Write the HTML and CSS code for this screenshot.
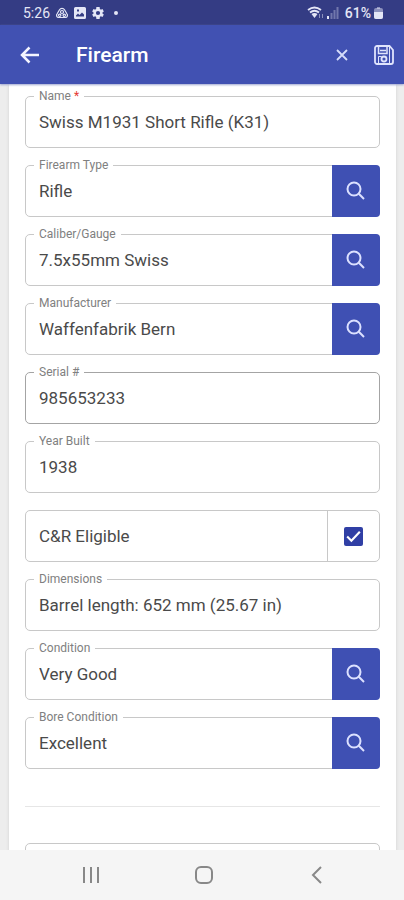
FILE: index.html
```
<!DOCTYPE html>
<html lang="en">
<head>
<meta charset="utf-8">
<meta name="viewport" content="width=device-width, initial-scale=1">
<title>Firearm</title>
<link rel="stylesheet" href="styles.css">
</head>
<body>
<svg class="sprite" aria-hidden="true">
  <symbol id="search" viewBox="0 0 20 20"><circle cx="8" cy="8" r="6.5"/><path d="M12.8 12.8L18 18"/></symbol>
</svg>
<div class="status">
  <span class="time">5:26</span>
  <svg class="status-icon" viewBox="0 0 12 12"><g fill="none" stroke="currentColor" stroke-width="1.2"><path d="M2.500 10.500A2.200 2.200 0 0 1 1 7L3.500 2.800A2.900 2.900 0 0 1 8.500 2.800L11 7A2.200 2.200 0 0 1 9.500 10.500Z"/><circle cx="6" cy="5" r="1.500"/><circle cx="3.700" cy="8.300" r="1.200"/><circle cx="8.300" cy="8.300" r="1.200"/></g></svg>
  <svg class="status-icon" viewBox="0 0 12 12"><path fill-rule="evenodd" d="M1.500 0h9A1.500 1.500 0 0 1 12 1.500v9A1.500 1.500 0 0 1 10.500 12h-9A1.500 1.500 0 0 1 0 10.500v-9A1.500 1.500 0 0 1 1.500 0zM2 9.500h8V7.500L8 5.500 5.500 8 4 6.500 2 8.500zM3 2.500v2h2v-2z"/></svg>
  <svg class="status-icon" viewBox="2 2 20 20"><path d="M19.400 13a7.500 7.500 0 0 0 0-2l2.300-1.700-2.200-3.900-2.700 1.100a7.500 7.500 0 0 0-1.700-1L14.700 2H9.300l-.4 3.500a7.500 7.500 0 0 0-1.700 1L4.500 5.400 2.300 9.300 4.600 11a7.500 7.500 0 0 0 0 2l-2.300 1.700 2.200 3.900 2.700-1.100a7.500 7.500 0 0 0 1.700 1l.4 3.500h5.400l.4-3.500a7.500 7.500 0 0 0 1.700-1l2.700 1.100 2.200-3.900zM12 15.500a3.500 3.500 0 1 1 0-7 3.500 3.500 0 0 1 0 7z"/></svg>
  <span class="dot"></span>
  <span class="signals">
    <svg width="17" height="13" viewBox="0 0 17 13"><g fill="none" stroke="currentColor" stroke-width="1.800"><path d="M1 4Q7.500-1 14 4"/><path d="M3 6.500Q7.500 3 12 6.500"/></g><path d="M4.500 8Q7.500 6 10.500 8L7.500 12z"/><path d="M12.500 8v4M15.500 8v4" stroke="currentColor" opacity=".5"/></svg>
    <svg width="12" height="12" viewBox="0 0 12 12"><path d="M0 9h2v3H0z"/><path d="M3.500 6h2v6h-2zM6.500 3h2v9h-2zM9.500 0h2v12h-2z" opacity=".35"/></svg>
    <span class="percent">61%</span>
    <svg width="9" height="12" viewBox="0 0 9 12"><path d="M3 0h3v2H3z" opacity=".5"/><rect y="1" width="9" height="11" rx="2" opacity=".5"/><path d="M0 5h9v5a2 2 0 0 1-2 2H2a2 2 0 0 1-2-2z"/></svg>
  </span>
</div>
<header class="bar">
  <button class="bar-button" aria-label="Back"><svg width="20" height="18" viewBox="0 0 20 18"><path d="M19 9H2M9.500 1.500L2 9l7.500 7.500" stroke-width="2.500"/></svg></button>
  <h1>Firearm</h1>
  <button class="bar-button close" aria-label="Cancel"><svg width="12" height="12" viewBox="0 0 12 12"><path d="M1 1l10 10M11 1L1 11" stroke-width="1.800"/></svg></button>
  <button class="bar-button save" aria-label="Save"><svg width="20" height="20" viewBox="0 0 20 20"><path d="M3 1h12.500L19 5v12a2 2 0 0 1-2 2H3a2 2 0 0 1-2-2V3a2 2 0 0 1 2-2z" stroke-width="1.800"/><path d="M4.500 2v6.500H13V2M6 5.500h6" stroke-width="1.500"/><path d="M15.500 2v17M4.500 18v-6.500h3" stroke-width="1"/><circle cx="10" cy="14" r="2.500" stroke-width="1.800"/></svg></button>
</header>
<main>
  <form class="card">
    <div class="field"><label for="name">Name <span class="required">*</span></label><input id="name" type="text" value="Swiss M1931 Short Rifle (K31)"></div>
    <div class="field"><label for="type">Firearm Type</label><input id="type" type="text" value="Rifle"><button type="button" class="lookup" aria-label="Search firearm type"><svg><use href="#search"/></svg></button></div>
    <div class="field"><label for="caliber">Caliber/Gauge</label><input id="caliber" type="text" value="7.5x55mm Swiss"><button type="button" class="lookup" aria-label="Search caliber"><svg><use href="#search"/></svg></button></div>
    <div class="field"><label for="maker">Manufacturer</label><input id="maker" type="text" value="Waffenfabrik Bern"><button type="button" class="lookup" aria-label="Search manufacturer"><svg><use href="#search"/></svg></button></div>
    <div class="field active"><label for="serial">Serial #</label><input id="serial" type="text" value="985653233"></div>
    <div class="field"><label for="year">Year Built</label><input id="year" type="text" value="1938"></div>
    <div class="field check"><label class="check-text" for="eligible">C&amp;R Eligible</label><span class="check-cell"><input id="eligible" type="checkbox" checked><svg viewBox="0 0 18 18"><path d="M3 9l4 4 8-8.500"/></svg></span></div>
    <div class="field"><label for="dimensions">Dimensions</label><input id="dimensions" type="text" value="Barrel length: 652 mm (25.67 in)"></div>
    <div class="field"><label for="condition">Condition</label><input id="condition" type="text" value="Very Good"><button type="button" class="lookup" aria-label="Search condition"><svg><use href="#search"/></svg></button></div>
    <div class="field"><label for="bore">Bore Condition</label><input id="bore" type="text" value="Excellent"><button type="button" class="lookup" aria-label="Search bore condition"><svg><use href="#search"/></svg></button></div>
    <hr>
    <div class="field"></div>
  </form>
</main>
<nav>
  <button aria-label="Recent apps"><svg width="18" height="18" viewBox="0 0 18 18"><path d="M2 1v16M9 1v16M16 1v16"/></svg></button>
  <button aria-label="Home"><svg width="18" height="18" viewBox="0 0 18 18"><rect x="1" y="1" width="16" height="16" rx="5"/></svg></button>
  <button aria-label="Back"><svg width="18" height="18" viewBox="0 0 18 18"><path d="M13 1L5 9l8 8"/></svg></button>
</nav>
</body>
</html>
```
FILE: styles.css
```
* { box-sizing: border-box; }
body {
  margin: 0;
  height: 100vh;
  display: flex;
  flex-direction: column;
  overflow: hidden;
  background: #ededed;
  color: #4a4a4a;
  font-family: Roboto, "Liberation Sans", sans-serif;
  font-size: 17px;
}
button { border: 0; padding: 0; background: none; color: inherit; display: grid; place-items: center; }
button svg { fill: none; stroke: currentColor; }
.sprite { display: none; }
.status {
  flex: none;
  height: 25px;
  padding: 0 21px 0 23px;
  display: flex;
  align-items: center;
  gap: 6px;
  background: #343c84;
  color: #e4e6f6;
  font-size: 14px;
}
.status svg { fill: currentColor; }
.status-icon { width: 12px; height: 12px; }
.dot { width: 4px; height: 4px; margin-left: 4px; border-radius: 50%; background: currentColor; }
.signals { margin-left: auto; display: flex; align-items: center; gap: 3px; }
.percent { margin-left: 3px; font-weight: 500; }
.bar {
  flex: none;
  height: 59px;
  padding: 0 10px;
  display: flex;
  align-items: center;
  background: #4151b2;
  color: #fff;
  box-shadow: 0 1px 2px #9da4cf;
  z-index: 1;
}
.bar h1 { flex: 1; margin: 0 0 0 26px; font-size: 21px; font-weight: 500; }
.bar-button { width: 40px; height: 40px; color: #f4f5ff; }
.save { width: 20px; color: #dfe4fc; }
.close { margin-right: 12px; color: #d5dcfa; }
main { flex: 1; min-height: 0; overflow: hidden; padding: 0 8px 0 9px; }
.card {
  min-height: 100%;
  padding: 12px 16px;
  display: flex;
  flex-direction: column;
  gap: 17px;
  background: #fff;
  box-shadow: 0 0 3px #d0d0d0;
}
.field {
  position: relative;
  flex: none;
  height: 52px;
  display: flex;
  border: 1px solid #c8c8c8;
  border-radius: 5px;
}
.active { border-color: #a4a4a4; }
.field > label:not(.check-text) {
  position: absolute;
  top: -9px;
  left: 8px;
  padding: 0 5px;
  background: #fff;
  color: #808080;
  font-size: 12px;
  line-height: 16px;
}
.field > label .required { color: #e53935; }
.field input[type="text"] {
  flex: 1;
  min-width: 0;
  padding: 0 13px;
  border: 0;
  outline: 0;
  background: none;
  color: inherit;
  font: inherit;
}
.lookup { width: 48px; margin: -1px; border-radius: 0 4px 4px 0; background: #3f50b3; color: #dce1ff; }
.lookup svg { width: 20px; height: 20px; stroke-width: 2; }
.check-text { flex: 1; padding: 0 13px; align-self: center; }
.check-cell { width: 52px; display: grid; place-items: center; place-content: center; border-left: 1px solid #c8c8c8; }
.check-cell > * { grid-area: 1 / 1; width: 19px; height: 19px; }
.check-cell input { appearance: none; margin: 0; border-radius: 2px; background: #303fa5; }
.check-cell svg { fill: none; stroke: #fff; stroke-width: 2; pointer-events: none; }
hr { width: 100%; margin: 20px 0 19px; border: 0; border-top: 1px solid #e6e6e6; }
nav {
  flex: none;
  height: 50px;
  padding: 0 30px 0 34px;
  display: grid;
  grid-template-columns: repeat(3, 1fr);
  background: #f5f5f5;
  color: #888;
  z-index: 1;
}
nav svg { stroke-width: 2; }
```
